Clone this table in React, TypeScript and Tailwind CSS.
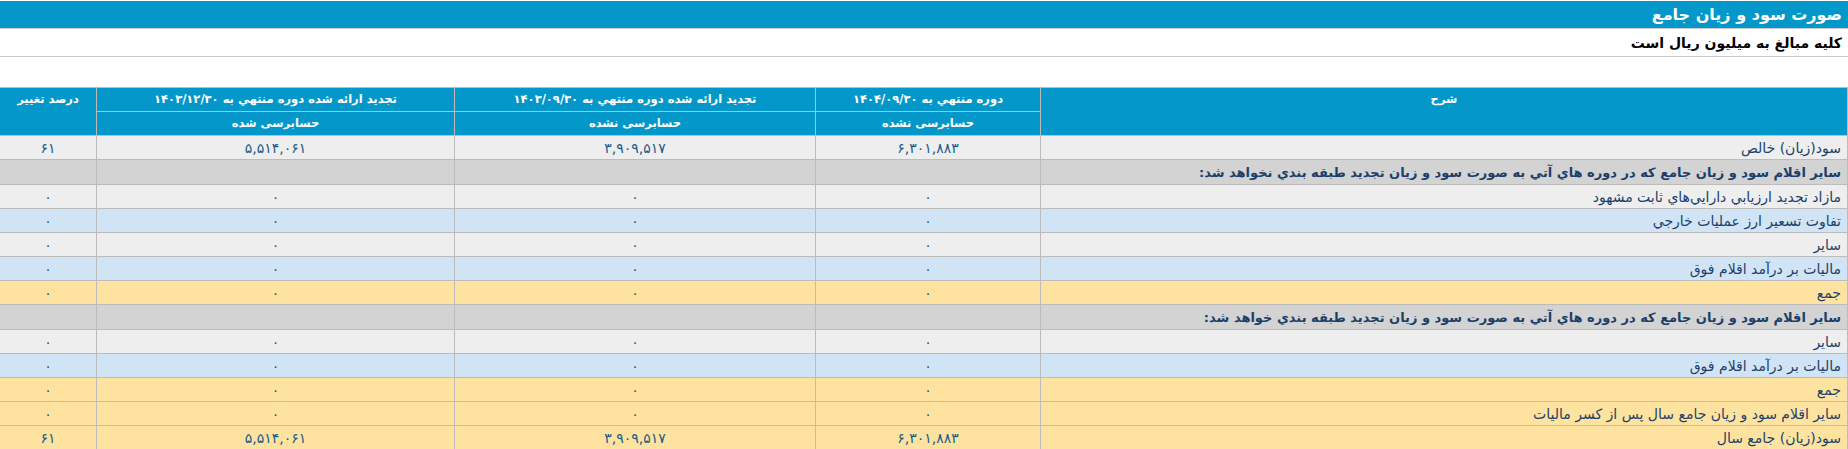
import React from "react";

type Row = {
  label: string;
  values: string[];
  kind: "plain" | "blue" | "yellow" | "section";
};

const Z = "۰";

const rows: Row[] = [
  { label: "سود(زيان) خالص", values: ["۶,۳۰۱,۸۸۳", "۳,۹۰۹,۵۱۷", "۵,۵۱۴,۰۶۱", "۶۱"], kind: "plain" },
  {
    label: "ساير اقلام سود و زيان جامع که در دوره هاي آتي به صورت سود و زيان تجديد طبقه بندي نخواهد شد:",
    values: ["", "", "", ""],
    kind: "section",
  },
  { label: "مازاد تجديد ارزيابي دارايي‌هاي ثابت مشهود", values: [Z, Z, Z, Z], kind: "plain" },
  { label: "تفاوت تسعير ارز عمليات خارجي", values: [Z, Z, Z, Z], kind: "blue" },
  { label: "ساير", values: [Z, Z, Z, Z], kind: "plain" },
  { label: "ماليات بر درآمد اقلام فوق", values: [Z, Z, Z, Z], kind: "blue" },
  { label: "جمع", values: [Z, Z, Z, Z], kind: "yellow" },
  {
    label: "ساير اقلام سود و زيان جامع که در دوره هاي آتي به صورت سود و زيان تجديد طبقه بندي خواهد شد:",
    values: ["", "", "", ""],
    kind: "section",
  },
  { label: "ساير", values: [Z, Z, Z, Z], kind: "plain" },
  { label: "ماليات بر درآمد اقلام فوق", values: [Z, Z, Z, Z], kind: "blue" },
  { label: "جمع", values: [Z, Z, Z, Z], kind: "yellow" },
  { label: "ساير اقلام سود و زيان جامع سال پس از کسر ماليات", values: [Z, Z, Z, Z], kind: "yellow" },
  { label: "سود(زيان) جامع سال", values: ["۶,۳۰۱,۸۸۳", "۳,۹۰۹,۵۱۷", "۵,۵۱۴,۰۶۱", "۶۱"], kind: "yellow" },
];

const rowBg: Record<Row["kind"], string> = {
  plain: "bg-[#eeeeee]",
  blue: "bg-[#d1e4f5]",
  yellow: "bg-[#fde39f]",
  section: "bg-[#d3d3d3]",
};

const cell = "border border-[#bcbcbc] h-[24px] px-1.5 py-0";

export default function App() {
  return (
    <div
      dir="rtl"
      className="w-[1848px] bg-white pt-px leading-none"
      style={{ fontFamily: '"DejaVu Sans", sans-serif' }}
    >
      <div className="h-[28px] bg-[#0398c9] border-b border-[#c8c8c8] px-1.5 flex items-center text-white font-bold text-[16px]">
        صورت سود و زيان جامع
      </div>
      <div className="h-[28px] border-b border-[#c8c8c8] px-1.5 flex items-center text-black font-bold text-[14px]">
        کليه مبالغ به ميليون ريال است
      </div>
      <div className="h-[30px]" />

      <table className="w-full border-collapse table-fixed">
        <colgroup>
          <col className="w-[807px]" />
          <col className="w-[225px]" />
          <col className="w-[361px]" />
          <col className="w-[358px]" />
          <col className="w-[97px]" />
        </colgroup>
        <thead className="bg-[#0398c9] text-white text-[11.5px]">
          <tr>
            <th rowSpan={2} className={`${cell} align-top pt-[6px] font-bold`}>
              شرح
            </th>
            <th className={`${cell} font-bold`}>دوره منتهي به ۱۴۰۴/۰۹/۳۰</th>
            <th className={`${cell} font-bold`}>تجديد ارائه شده دوره منتهي به ۱۴۰۳/۰۹/۳۰</th>
            <th className={`${cell} font-bold`}>تجديد ارائه شده دوره منتهي به ۱۴۰۳/۱۲/۳۰</th>
            <th rowSpan={2} className={`${cell} align-top pt-[6px] font-bold`}>
              درصد تغيير
            </th>
          </tr>
          <tr>
            <th className={`${cell} font-bold`}>حسابرسی نشده</th>
            <th className={`${cell} font-bold`}>حسابرسی نشده</th>
            <th className={`${cell} font-bold`}>حسابرسی شده</th>
          </tr>
        </thead>
        <tbody className="text-[#1b3f6a] text-[14px]">
          {rows.map((r, i) => (
            <tr key={i} className={rowBg[r.kind]}>
              <td
                className={`${cell} text-right ${
                  r.kind === "section" ? "font-bold h-[25px] text-[13px]" : ""
                }`}
              >
                {r.label}
              </td>
              {r.values.map((v, j) => (
                <td key={j} className={`${cell} text-center text-[#1a5a86]`}>
                  {v}
                </td>
              ))}
            </tr>
          ))}
        </tbody>
      </table>
    </div>
  );
}
